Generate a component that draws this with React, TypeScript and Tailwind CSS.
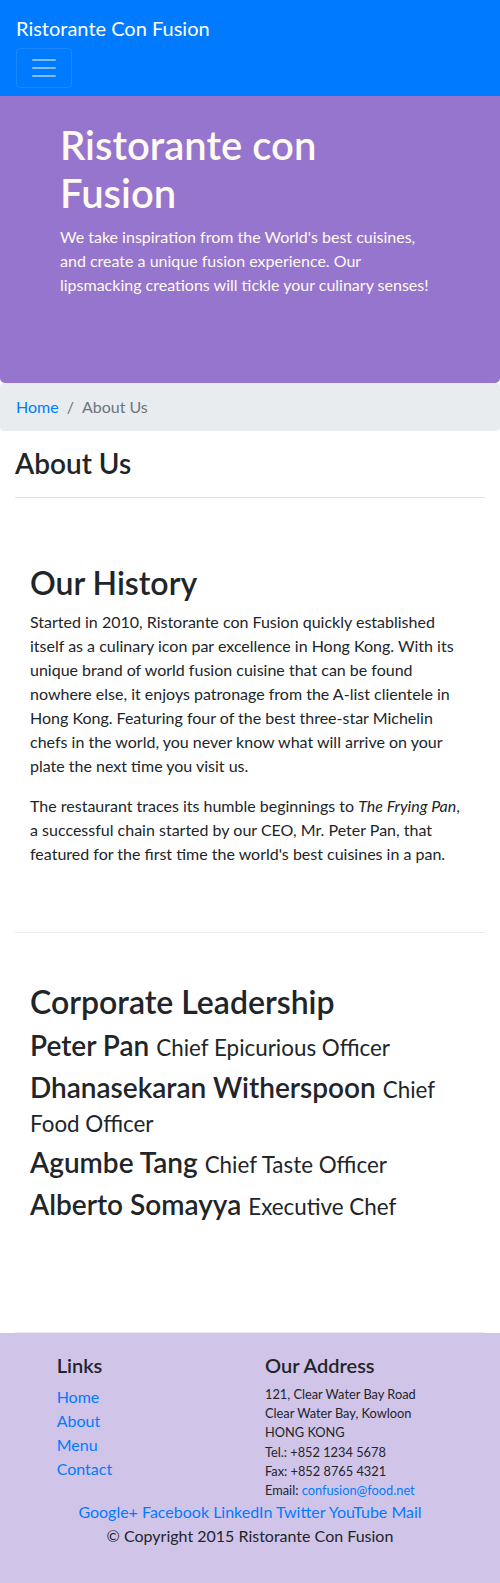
import React from "react";

const leaders = [
  { name: "Peter Pan", title: "Chief Epicurious Officer" },
  { name: "Dhanasekaran Witherspoon", title: "Chief Food Officer" },
  { name: "Agumbe Tang", title: "Chief Taste Officer" },
  { name: "Alberto Somayya", title: "Executive Chef" },
];

const App = () => {
  return (
    <div className="min-h-[1583px] bg-white font-['Lato',sans-serif] text-base leading-6 text-[#212529]">
      {/* navbar */}
      <nav className="bg-[#007bff] px-4 py-2">
        <div className="py-[5px] text-[20px] leading-[30px] text-white">Ristorante Con Fusion</div>
        <button className="flex h-10 w-14 items-center justify-center rounded border border-white/10">
          <svg width="30" height="30" viewBox="0 0 30 30">
            <path
              d="M4 7h22M4 15h22M4 23h22"
              stroke="rgba(255,255,255,0.5)"
              strokeWidth="2"
              strokeLinecap="round"
            />
          </svg>
        </button>
      </nav>

      {/* jumbotron */}
      <header className="h-[287px] rounded-b-[5px] bg-[#9575cd] pt-[25px] text-[#fffaf0]">
        <div className="w-[380px] pl-[60px] box-content">
          <h1 className="mb-2 text-[40px] font-semibold leading-[1.2]">Ristorante con Fusion</h1>
          <p className="mb-4">
            We take inspiration from the World's best cuisines, and create a unique fusion experience. Our
            lipsmacking creations will tickle your culinary senses!
          </p>
        </div>
      </header>

      {/* breadcrumb */}
      <ol className="mb-4 flex rounded bg-[#e9ecef] px-4 py-3">
        <li className="text-[#007bff]">Home</li>
        <li className="px-2 text-[#6c757d]">/</li>
        <li className="text-[#6c757d]">About Us</li>
      </ol>

      <div className="px-[15px]">
        <h3 className="text-[28px] font-semibold leading-[1.2]">About Us</h3>
        <hr className="mt-4 border-t border-[#e2e2e2]" />

        {/* history */}
        <section className="mt-4 min-h-[418px] border-b border-[#ececec] px-[15px] py-[50px]">
          <h2 className="mb-2 text-[32px] font-semibold leading-[1.2]">Our History</h2>
          <p className="mb-4 pr-[10px]">
            Started in 2010, Ristorante con Fusion quickly established itself as a culinary icon par excellence in
            Hong Kong. With its unique brand of world fusion cuisine that can be found nowhere else, it enjoys
            patronage from the A-list clientele in Hong Kong. Featuring four of the best three-star Michelin chefs in
            the world, you never know what will arrive on your plate the next time you visit us.
          </p>
          <p className="mb-4 pr-[10px]">
            The restaurant traces its humble beginnings to <em>The Frying Pan</em>, a successful chain started by our
            CEO, Mr. Peter Pan, that featured for the first time the world's best cuisines in a pan.
          </p>
        </section>

        {/* leadership */}
        <section className="min-h-[400px] border-b border-[#ececec] px-[15px] py-[50px]">
          <h2 className="mb-2 text-[32px] font-semibold leading-[1.2]">Corporate Leadership</h2>
          {leaders.map((l) => (
            <h3 key={l.name} className="mb-2 text-[28px] font-semibold leading-[1.2]">
              {l.name} <small className="text-[22.4px] font-normal">{l.title}</small>
            </h3>
          ))}
        </section>
      </div>

      {/* footer */}
      <footer className="bg-[#d1c4e9] pt-5 pb-5">
        <div className="flex flex-wrap">
          <div className="ml-[41.67px] w-[166.67px] px-[15px]">
            <h5 className="mb-2 text-[20px] font-semibold leading-[1.2]">Links</h5>
            <ul>
              {["Home", "About", "Menu", "Contact"].map((x) => (
                <li key={x} className="text-[#007bff]">
                  {x}
                </li>
              ))}
            </ul>
          </div>
          <div className="ml-[41.67px] w-[250px] px-[15px]">
            <h5 className="mb-2 text-[20px] font-semibold leading-[1.2]">Our Address</h5>
            <address className="text-[12.8px] not-italic leading-[19.2px]">
              121, Clear Water Bay Road
              <br />
              Clear Water Bay, Kowloon
              <br />
              HONG KONG
              <br />
              Tel.: +852 1234 5678
              <br />
              Fax: +852 8765 4321
              <br />
              Email: <span className="text-[#007bff]">confusion@food.net</span>
            </address>
          </div>
          <div className="w-full px-[15px] text-center text-[#007bff]">
            Google+ Facebook LinkedIn Twitter YouTube Mail
          </div>
          <div className="w-full px-[15px] text-center">
            <p className="mb-4">© Copyright 2015 Ristorante Con Fusion</p>
          </div>
        </div>
      </footer>
    </div>
  );
};

export default App;
